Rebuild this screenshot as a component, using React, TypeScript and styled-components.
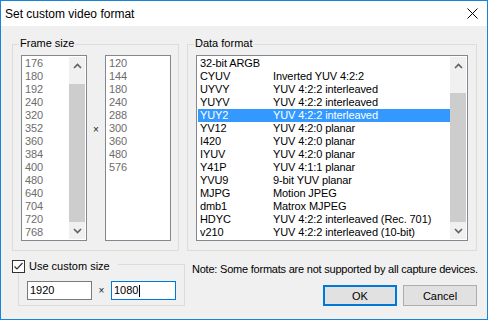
import React from "react";
import styled, { createGlobalStyle } from "styled-components";

const GlobalStyle = createGlobalStyle`
  html, body { margin: 0; padding: 0; background: #ffffff; }
  * { box-sizing: border-box; }
`;

const Window = styled.div`
  width: 488px;
  height: 320px;
  border: 1px solid #1883d7;
  display: flex;
  flex-direction: column;
  font-family: "Liberation Sans", Arial, sans-serif;
  font-size: 11px;
  color: #000;
  background: #f0f0f0;
  overflow: hidden;
`;

const TitleBar = styled.div`
  height: 25px;
  flex: 0 0 25px;
  background: #ffffff;
  display: flex;
  align-items: center;
  justify-content: space-between;
  padding-left: 4px;
  padding-right: 9px;
`;

const Title = styled.span`
  font-size: 12px;
  line-height: 14px;
  color: #000;
`;

const CloseIcon = styled.svg`
  width: 11px;
  height: 11px;
  display: block;
`;

const Body = styled.div`
  flex: 1;
  display: flex;
  flex-direction: column;
  padding: 18px 10px 0 11px;
`;

const TopRow = styled.div`
  display: flex;
  gap: 8px;
  height: 207px;
`;

const GroupBox = styled.div<{ $w: number }>`
  position: relative;
  width: ${(p) => p.$w}px;
  height: 100%;
  border: 1px solid #dcdcdc;
  display: flex;
  align-items: flex-start;
  padding: 10px 0 0 8px;
`;

const GroupLabel = styled.span`
  position: absolute;
  top: -8px;
  left: 6px;
  padding: 0 1px;
  line-height: 13px;
  background: #f0f0f0;
`;

const ListBox = styled.div<{ $w: number }>`
  width: ${(p) => p.$w}px;
  height: 186px;
  border: 1px solid #828790;
  background: #ffffff;
  padding: 1px;
  display: flex;
`;

const Items = styled.div`
  flex: 1;
  display: flex;
  flex-direction: column;
  min-width: 0;
`;

const Item = styled.div<{ $disabled?: boolean; $selected?: boolean }>`
  height: 13px;
  line-height: 13px;
  padding-left: 2px;
  white-space: nowrap;
  display: flex;
  letter-spacing: -0.1px;
  color: ${(p) => (p.$selected ? "#ffffff" : p.$disabled ? "#6d6d6d" : "#000000")};
  background: ${(p) => (p.$selected ? "#3399ff" : "transparent")};
`;

const Col1 = styled.span`
  width: 73px;
  flex: 0 0 73px;
`;

const ScrollBar = styled.div`
  width: 16px;
  flex: 0 0 16px;
  background: #f0f0f0;
  display: flex;
  flex-direction: column;
`;

const ScrollArrow = styled.div`
  height: 17px;
  flex: 0 0 17px;
  display: flex;
  align-items: center;
  justify-content: center;
`;

const Track = styled.div`
  flex: 1;
  display: flex;
  flex-direction: column;
`;

const Thumb = styled.div<{ $top: number; $h: number }>`
  margin-top: ${(p) => p.$top}px;
  height: ${(p) => p.$h}px;
  background: #cdcdcd;
`;

const TimesSign = styled.div<{ $w: number; $top?: number }>`
  width: ${(p) => p.$w}px;
  flex: 0 0 ${(p) => p.$w}px;
  text-align: center;
  line-height: 13px;
  font-size: 10px;
  margin-top: ${(p) => p.$top ?? 0}px;
  color: #202020;
`;

const BottomRow = styled.div`
  display: flex;
  margin-top: 9px;
`;

const CustomWrap = styled.div`
  position: relative;
  padding: 4px 0 0 6px;
  width: 173px;
  flex: 0 0 173px;
`;

const CustomHeader = styled.label`
  position: absolute;
  top: 0;
  left: 0;
  display: flex;
  align-items: center;
  gap: 4px;
  padding-right: 8px;
  background: #f0f0f0;
  line-height: 13px;
  height: 13px;
`;

const CheckBox = styled.span`
  width: 13px;
  height: 13px;
  border: 1px solid #333333;
  background: #ffffff;
  display: flex;
  align-items: center;
  justify-content: center;
`;

const CustomGroup = styled.div`
  width: 167px;
  height: 42px;
  border: 1px solid #dcdcdc;
  padding: 11px 0 0 8px;
  display: flex;
  align-items: center;
  align-self: flex-start;
`;

const Edit = styled.div<{ $focused?: boolean }>`
  width: 65px;
  height: 19px;
  border: 1px solid ${(p) => (p.$focused ? "#0078d7" : "#7a7a7a")};
  background: #ffffff;
  padding-left: 2px;
  display: flex;
  align-items: center;
  line-height: 13px;
`;

const Caret = styled.span`
  display: inline-block;
  width: 1px;
  height: 12px;
  background: #000;
  margin-left: 1px;
`;

const RightCol = styled.div`
  flex: 1;
  min-width: 0;
  display: flex;
  flex-direction: column;
  align-items: stretch;
  padding-left: 7px;
`;

const Note = styled.div`
  margin-top: 3px;
  line-height: 13px;
  white-space: nowrap;
  letter-spacing: -0.22px;
`;

const Buttons = styled.div`
  margin-top: 9px;
  display: flex;
  justify-content: flex-end;
  gap: 6px;
`;

const Button = styled.button<{ $default?: boolean }>`
  width: 74px;
  height: 21px;
  margin: 0;
  padding: 0;
  font-family: "Liberation Sans", Arial, sans-serif;
  font-size: 11px;
  color: #000;
  background: #e1e1e1;
  border: ${(p) => (p.$default ? "2px solid #0078d7" : "1px solid #adadad")};
  border-radius: 0;
  display: flex;
  align-items: center;
  justify-content: center;
`;

const Chevron = ({ up }: { up?: boolean }) => (
  <svg width="9" height="6" viewBox="0 0 9 6" style={{ display: "block" }}>
    <polyline
      points={up ? "1,5 4.5,1.5 8,5" : "1,1 4.5,4.5 8,1"}
      fill="none"
      stroke="#606060"
      strokeWidth="1.6"
    />
  </svg>
);

const widths = ["176", "180", "192", "240", "320", "352", "360", "384", "400", "480", "640", "704", "720", "768"];
const heights = ["120", "144", "180", "240", "288", "300", "360", "480", "576"];
const formats: [string, string][] = [
  ["32-bit ARGB", ""],
  ["CYUV", "Inverted YUV 4:2:2"],
  ["UYVY", "YUV 4:2:2 interleaved"],
  ["YUYV", "YUV 4:2:2 interleaved"],
  ["YUY2", "YUV 4:2:2 interleaved"],
  ["YV12", "YUV 4:2:0 planar"],
  ["I420", "YUV 4:2:0 planar"],
  ["IYUV", "YUV 4:2:0 planar"],
  ["Y41P", "YUV 4:1:1 planar"],
  ["YVU9", "9-bit YUV planar"],
  ["MJPG", "Motion JPEG"],
  ["dmb1", "Matrox MJPEG"],
  ["HDYC", "YUV 4:2:2 interleaved (Rec. 701)"],
  ["v210", "YUV 4:2:2 interleaved (10-bit)"],
];

export default function App() {
  return (
    <>
      <GlobalStyle />
      <Window>
        <TitleBar>
          <Title>Set custom video format</Title>
          <CloseIcon viewBox="0 0 11 11">
            <path d="M0.5 0.5 L10.5 10.5 M10.5 0.5 L0.5 10.5" stroke="#000" strokeWidth="1" />
          </CloseIcon>
        </TitleBar>
        <Body>
          <TopRow>
            <GroupBox $w={167}>
              <GroupLabel>Frame size</GroupLabel>
              <ListBox $w={66}>
                <Items>
                  {widths.map((w) => (
                    <Item key={w} $disabled>
                      {w}
                    </Item>
                  ))}
                </Items>
                <ScrollBar>
                  <ScrollArrow>
                    <Chevron up />
                  </ScrollArrow>
                  <Track>
                    <Thumb $top={10} $h={138} />
                  </Track>
                  <ScrollArrow>
                    <Chevron />
                  </ScrollArrow>
                </ScrollBar>
              </ListBox>
              <TimesSign $w={18} $top={68}>
                ×
              </TimesSign>
              <ListBox $w={66}>
                <Items>
                  {heights.map((h) => (
                    <Item key={h} $disabled>
                      {h}
                    </Item>
                  ))}
                </Items>
              </ListBox>
            </GroupBox>
            <GroupBox $w={290}>
              <GroupLabel>Data format</GroupLabel>
              <ListBox $w={272}>
                <Items>
                  {formats.map(([code, desc]) => (
                    <Item key={code} $selected={code === "YUY2"}>
                      <Col1>{code}</Col1>
                      <span>{desc}</span>
                    </Item>
                  ))}
                </Items>
                <ScrollBar>
                  <ScrollArrow>
                    <Chevron up />
                  </ScrollArrow>
                  <Track>
                    <Thumb $top={19} $h={129} />
                  </Track>
                  <ScrollArrow>
                    <Chevron />
                  </ScrollArrow>
                </ScrollBar>
              </ListBox>
            </GroupBox>
          </TopRow>
          <BottomRow>
            <CustomWrap>
              <CustomHeader>
                <CheckBox>
                  <svg width="11" height="11" viewBox="0 0 11 11" style={{ display: "block" }}>
                    <polyline points="1.5,5.5 4,8 9.5,2" fill="none" stroke="#333" strokeWidth="1.2" />
                  </svg>
                </CheckBox>
                <span>Use custom size</span>
              </CustomHeader>
              <CustomGroup>
                <Edit>1920</Edit>
                <TimesSign $w={19}>×</TimesSign>
                <Edit $focused>
                  1080
                  <Caret />
                </Edit>
              </CustomGroup>
            </CustomWrap>
            <RightCol>
              <Note>Note: Some formats are not supported by all capture devices.</Note>
              <Buttons>
                <Button $default>OK</Button>
                <Button>Cancel</Button>
              </Buttons>
            </RightCol>
          </BottomRow>
        </Body>
      </Window>
    </>
  );
}
